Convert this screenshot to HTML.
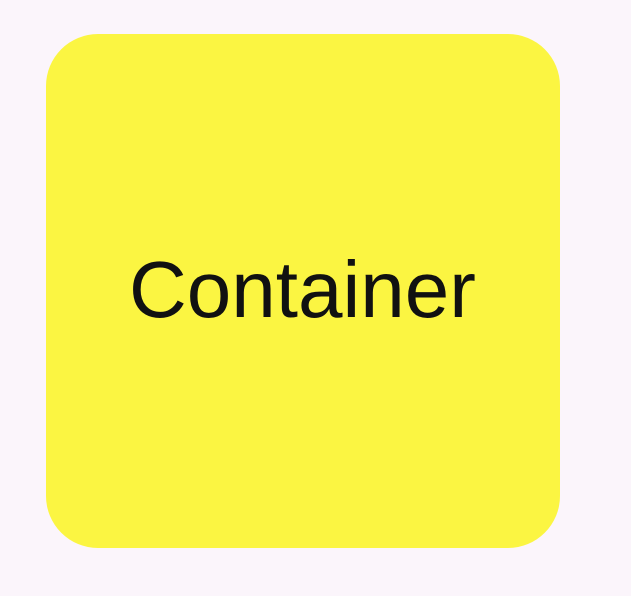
<!DOCTYPE html>
<html><head><style>
html,body{margin:0;padding:0;width:631px;height:596px;background:#fbf5fb;overflow:hidden}
.b{position:absolute;left:46px;top:34px;width:514px;height:514px;border-radius:52px;background:#fbf542}
.t{position:absolute;left:83px;top:216px;font-family:"Liberation Sans",sans-serif;font-size:80px;line-height:1;color:#111;white-space:nowrap}
</style></head><body>
<div class="b"><div class="t">Container</div></div>
</body></html>
